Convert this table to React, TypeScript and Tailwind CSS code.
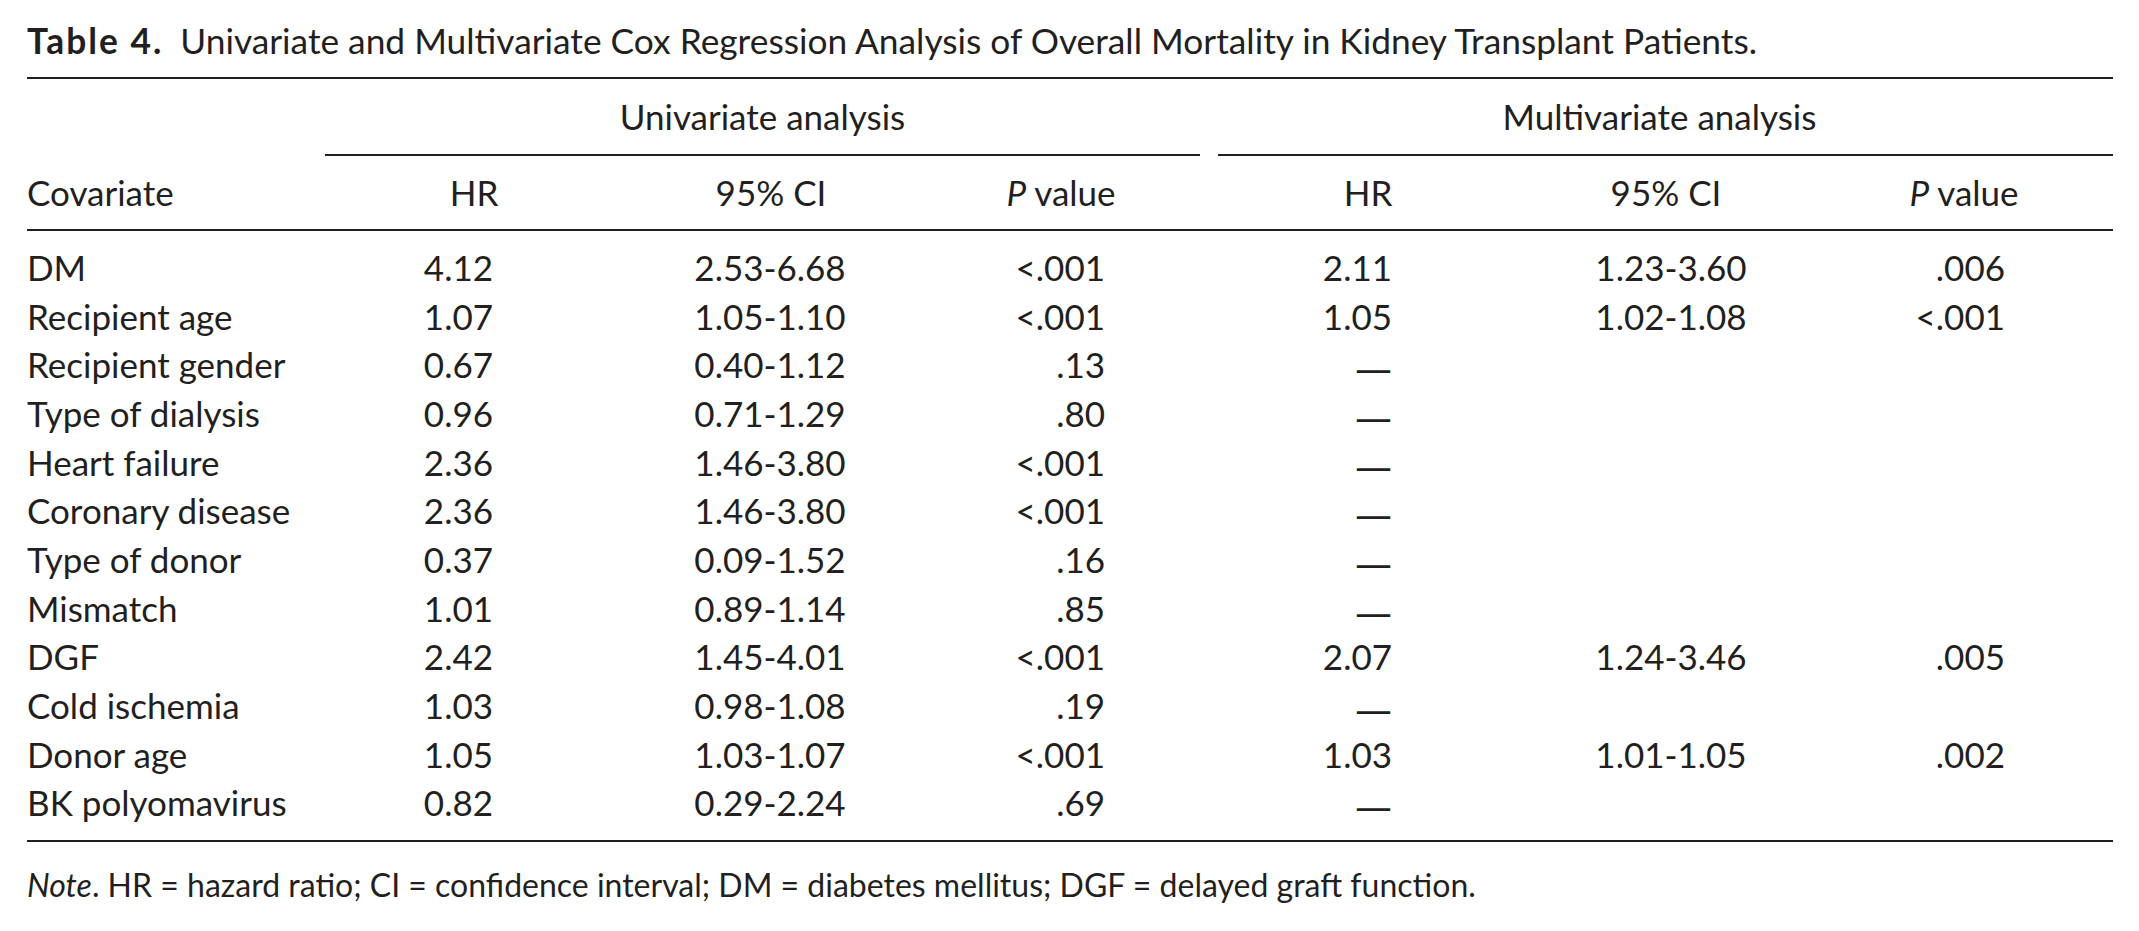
import React from "react";

type Row = {
  name: string;
  hr: string;
  ci: string;
  p: string;
  mhr?: string;
  mci?: string;
  mp?: string;
};

const rows: Row[] = [
  { name: "DM", hr: "4.12", ci: "2.53-6.68", p: "<.001", mhr: "2.11", mci: "1.23-3.60", mp: ".006" },
  { name: "Recipient age", hr: "1.07", ci: "1.05-1.10", p: "<.001", mhr: "1.05", mci: "1.02-1.08", mp: "<.001" },
  { name: "Recipient gender", hr: "0.67", ci: "0.40-1.12", p: ".13" },
  { name: "Type of dialysis", hr: "0.96", ci: "0.71-1.29", p: ".80" },
  { name: "Heart failure", hr: "2.36", ci: "1.46-3.80", p: "<.001" },
  { name: "Coronary disease", hr: "2.36", ci: "1.46-3.80", p: "<.001" },
  { name: "Type of donor", hr: "0.37", ci: "0.09-1.52", p: ".16" },
  { name: "Mismatch", hr: "1.01", ci: "0.89-1.14", p: ".85" },
  { name: "DGF", hr: "2.42", ci: "1.45-4.01", p: "<.001", mhr: "2.07", mci: "1.24-3.46", mp: ".005" },
  { name: "Cold ischemia", hr: "1.03", ci: "0.98-1.08", p: ".19" },
  { name: "Donor age", hr: "1.05", ci: "1.03-1.07", p: "<.001", mhr: "1.03", mci: "1.01-1.05", mp: ".002" },
  { name: "BK polyomavirus", hr: "0.82", ci: "0.29-2.24", p: ".69" },
];

const cols = "grid grid-cols-[298px_235px_340px_300px_18px_262px_340px_293px]";

export default function App() {
  return (
    <div className="w-[2139px] min-h-[931px] bg-white pl-[27px] font-['Lato',sans-serif] text-[35px] text-[#231f20] leading-none">
      <div className="flex h-[77px] items-center pt-[5px] text-[35.3px]">
        <span className="font-bold tracking-[2px]">Table 4.</span>
        <span className="ml-[17px]">
          Univariate and Multivariate Cox Regression Analysis of Overall Mortality in Kidney Transplant Patients.
        </span>
      </div>

      <div className="w-[2086px] border-t-2 border-[#231f20]">
        {/* spanner row */}
        <div className="grid grid-cols-[298px_875px_18px_895px]">
          <div />
          <div className="flex h-[77px] items-center justify-center border-b-2 border-[#231f20]">
            Univariate analysis
          </div>
          <div />
          <div className="flex h-[77px] items-center justify-center border-b-2 border-[#231f20] pr-[12px]">
            Multivariate analysis
          </div>
        </div>

        {/* column headers */}
        <div className={`${cols} h-[75px] items-center border-b-2 border-[#231f20]`}>
          <div>Covariate</div>
          <div className="pl-[63px] text-center">HR</div>
          <div className="pl-[82px] text-center">95% CI</div>
          <div className="pl-[22px] text-center">
            <i>P</i> value
          </div>
          <div />
          <div className="pl-[38px] text-center">HR</div>
          <div className="pl-[32px] text-center">95% CI</div>
          <div className="pr-[5px] text-center">
            <i>P</i> value
          </div>
        </div>

        {/* body */}
        <div className="border-b-2 border-[#231f20] pt-[12px] pb-[13px]">
          {rows.map((r) => (
            <div key={r.name} className={`${cols} h-[48.7px] items-center`}>
              <div>{r.name}</div>
              <div className="pr-[67px] text-right">{r.hr}</div>
              <div className="pl-[80px] text-center">{r.ci}</div>
              <div className="pr-[95px] text-right">{r.p}</div>
              <div />
              <div className="pr-[88px] text-right">
                {r.mhr ?? (
                  <span className="inline-block translate-y-[5px] font-['DejaVu_Sans',sans-serif] text-[37px]">—</span>
                )}
              </div>
              <div className="pl-[42px] text-center">{r.mci ?? ""}</div>
              <div className="pr-[108px] text-right">{r.mp ?? ""}</div>
            </div>
          ))}
        </div>
      </div>

      <div className="flex h-[86px] items-center text-[32px]">
        <span>
          <i>Note</i>. HR = hazard ratio; CI = confidence interval; DM = diabetes mellitus; DGF = delayed graft function.
        </span>
      </div>
    </div>
  );
}
